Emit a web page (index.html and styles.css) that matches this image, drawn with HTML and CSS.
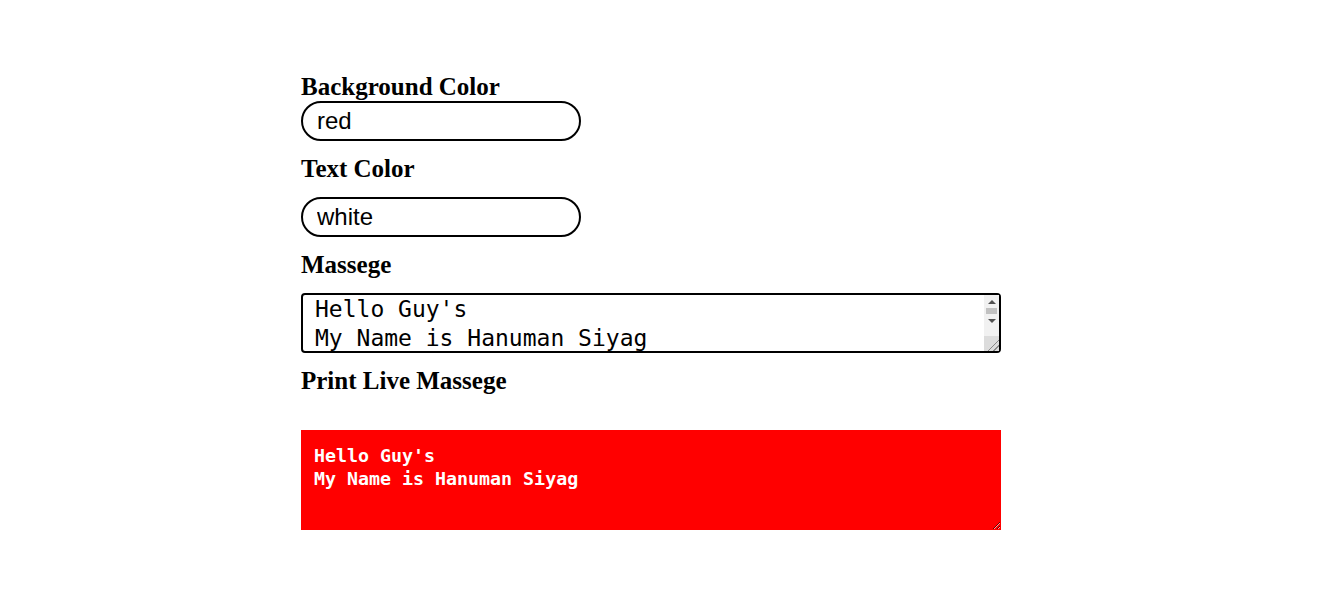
FILE: index.html
```html
<!DOCTYPE html>
<html>
<head>
<meta charset="utf-8">
<link rel="stylesheet" href="styles.css">
</head>
<body>
<main class="form">
  <h3 class="label label-first">Background Color</h3>
  <input class="pill" type="text" value="red">
  <h3 class="label label-text">Text Color</h3>
  <input class="pill" type="text" value="white">
  <h3 class="label label-msg">Massege</h3>
  <div class="msg-wrap">
    <textarea class="msg" rows="2">Hello Guy's
My Name is Hanuman Siyag</textarea>
    <div class="fake-scroll">
      <span class="arrow arrow-up"></span>
      <span class="thumb"></span>
      <span class="arrow arrow-down"></span>
      <span class="track"></span>
      <span class="corner"></span>
    </div>
  </div>
  <h3 class="label label-print">Print Live Massege</h3>
  <textarea class="output" readonly>Hello Guy's
My Name is Hanuman Siyag</textarea>
</main>
</body>
</html>
```

FILE: styles.css
```css
html, body {
  margin: 0;
  padding: 0;
  background: #fff;
}
.form {
  display: flex;
  flex-direction: column;
  align-items: flex-start;
  padding: 72px 0 0 301px;
}
.label {
  margin: 0;
  font-family: "Liberation Serif", "Times New Roman", serif;
  font-weight: bold;
  font-size: 25px;
  line-height: 29px;
  color: #000;
}
.label-text { margin-top: 13px; margin-bottom: 14px; }
.label-msg { margin-top: 13px; margin-bottom: 14px; }
.label-print { margin-top: 13px; margin-bottom: 35px; }
.pill {
  box-sizing: border-box;
  width: 280px;
  height: 40px;
  margin: 0;
  border: 2px solid #000;
  border-radius: 20px;
  padding: 0 14px;
  font-family: "Liberation Sans", Arial, sans-serif;
  font-size: 24px;
  color: #000;
  outline: none;
  background: #fff;
}
.msg-wrap {
  position: relative;
  width: 700px;
  height: 60px;
}
.msg {
  display: block;
  box-sizing: border-box;
  width: 700px;
  height: 60px;
  margin: 0;
  border: 2px solid #000;
  border-radius: 4px;
  padding: 0 30px 0 12px;
  font-family: "DejaVu Sans Mono", monospace;
  font-size: 23px;
  line-height: 29px;
  color: #000;
  overflow: hidden;
  resize: none;
  outline: none;
}
.fake-scroll {
  position: absolute;
  top: 2px;
  right: 2px;
  bottom: 2px;
  width: 15px;
  background: #f1f1f1;
  display: flex;
  flex-direction: column;
  align-items: center;
}
.arrow {
  width: 0;
  height: 0;
  border-left: 4px solid transparent;
  border-right: 4px solid transparent;
}
.arrow-up {
  margin-top: 5px;
  border-bottom: 4px solid #505050;
}
.thumb {
  margin-top: 4px;
  width: 11px;
  height: 6px;
  background: #c1c1c1;
}
.arrow-down {
  margin-top: 5px;
  border-top: 4px solid #505050;
}
.track { flex: 1; }
.corner {
  width: 15px;
  height: 15px;
  background: #dcdcdc linear-gradient(135deg, transparent 60%, #888 60%, #888 66%, transparent 66%, transparent 78%, #888 78%, #888 84%, transparent 84%);
}
.output {
  box-sizing: border-box;
  width: 700px;
  height: 100px;
  margin: 0;
  border: none;
  padding: 14px 13px 12px;
  background: #ff0000;
  color: #fff;
  font-family: "DejaVu Sans Mono", monospace;
  font-weight: bold;
  font-size: 18.3px;
  line-height: 23px;
  resize: both;
  outline: none;
  overflow: hidden;
}
```
